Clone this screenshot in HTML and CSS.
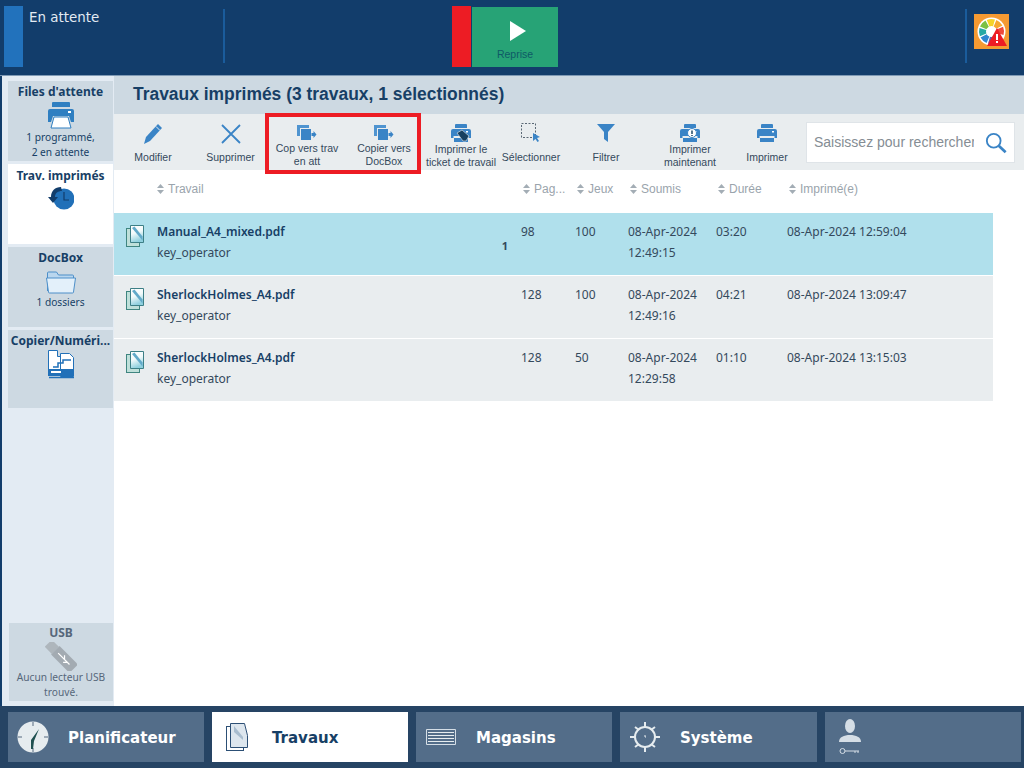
FILE: index.html
```html
<!DOCTYPE html>
<html lang="fr">
<head>
    <meta charset="UTF-8">
    <title>Travaux imprimés</title>
    <link rel="stylesheet" href="styles.css">
</head>
<body>
    <svg class="defs" width="0" height="0">
        <defs>
            <linearGradient id="docFill" x1="0" y1="0" x2="0.300" y2="1">
                <stop offset="0" stop-color="#ffffff"/>
                <stop offset="0.500" stop-color="#f2fafb"/>
                <stop offset="1" stop-color="#8fd0de"/>
            </linearGradient>
            <symbol id="ico-printer" viewBox="0 0 28 28">
                <path d="M6 1h16a1 1 0 0 1 1 1v4H5V2a1 1 0 0 1 1-1z" fill="#2f7fc1"/>
                <path d="M3 8h22a2 2 0 0 1 2 2v11h-3l-2-6H6l-2 6H1V10a2 2 0 0 1 2-2z" fill="#2f7fc1"/>
                <rect x="21" y="10" width="3" height="2" fill="#fff"/>
                <path d="M7 16h14l3 11H4z" fill="#fff" stroke="#2f7fc1"/>
            </symbol>
            <symbol id="ico-print-small" viewBox="0 0 20 20">
                <path d="M5 1h10a1 1 0 0 1 1 1v3H4V2a1 1 0 0 1 1-1z" fill="#3a84c6"/>
                <path d="M2 6h16a2 2 0 0 1 2 2v7h-3v-2H3v2H0V8a2 2 0 0 1 2-2z" fill="#3a84c6"/>
                <rect x="15" y="8" width="2" height="1.500" fill="#fff"/>
                <path d="M3 15h14v4H3z" fill="#3a84c6"/>
                <path d="M2 14h16" stroke="#e9edef"/>
            </symbol>
            <symbol id="ico-copy" viewBox="0 0 20 16">
                <rect x="0" y="0" width="12" height="11" fill="#4f94d0"/>
                <rect x="3.500" y="3.500" width="11" height="12" fill="#3a84c6" stroke="#e9edef"/>
                <path d="M14.500 8h2V6l3 3.500-3 3.500v-2h-2z" fill="#3a84c6"/>
            </symbol>
            <symbol id="ico-doc" viewBox="0 0 18 22">
                <rect x="0.500" y="3.500" width="13" height="18" fill="#bfe0da" stroke="#3f8580"/>
                <path d="M4.500 0.500h13v17h-13z" fill="url(#docFill)" stroke="#3d7f86"/>
                <path d="M6 3l2.500-1.500 8 10v4z" fill="#62a9c9"/>
            </symbol>
            <symbol id="ico-sort" viewBox="0 0 7 10">
                <path d="M3.500 0L7 4H0zM3.500 10L0 6h7z" fill="#a3adb5"/>
            </symbol>
        </defs>
    </svg>

    <header class="status-bar">
        <div class="status-block"></div>
        <div class="status-text">En attente</div>
        <div class="status-sep"></div>
        <div class="stop-btn"></div>
        <div class="resume-btn">
            <svg class="resume-icon" width="16" height="20" viewBox="0 0 16 20"><path d="M0 0l16 10L0 20z" fill="#fff"/></svg>
            <span>Reprise</span>
        </div>
        <div class="status-sep status-sep-right"></div>
        <div class="alert-btn">
            <svg width="35" height="35" viewBox="0 0 35 35">
                <rect width="35" height="35" fill="#f59a32"/>
                <circle cx="17.500" cy="17.500" r="14" fill="#fff"/>
                <g fill="none" stroke-width="7">
                    <circle cx="17.500" cy="17.500" r="9" pathLength="80" stroke-dasharray="8.500 71.500" stroke="#f5d327" transform="rotate(-112 17.500 17.500)"/>
                    <circle cx="17.500" cy="17.500" r="9" pathLength="80" stroke-dasharray="8.500 71.500" stroke="#f7a62e" transform="rotate(-67 17.500 17.500)"/>
                    <circle cx="17.500" cy="17.500" r="9" pathLength="80" stroke-dasharray="8.500 71.500" stroke="#ee4a3b" transform="rotate(-22 17.500 17.500)"/>
                    <circle cx="17.500" cy="17.500" r="9" pathLength="80" stroke-dasharray="8.500 71.500" stroke="#7cc143" transform="rotate(-157 17.500 17.500)"/>
                    <circle cx="17.500" cy="17.500" r="9" pathLength="80" stroke-dasharray="8.500 71.500" stroke="#27a9a4" transform="rotate(158 17.500 17.500)"/>
                    <circle cx="17.500" cy="17.500" r="9" pathLength="80" stroke-dasharray="8.500 71.500" stroke="#2f86d0" transform="rotate(113 17.500 17.500)"/>
                    <circle cx="17.500" cy="17.500" r="9" pathLength="80" stroke-dasharray="8.500 71.500" stroke="#5b62b5" transform="rotate(68 17.500 17.500)"/>
                </g>
                <path d="M23 14L33 32H13z" fill="#ed1c24"/>
                <rect x="22" y="20" width="2" height="6" fill="#fff"/>
                <rect x="22" y="27" width="2" height="2" fill="#fff"/>
            </svg>
        </div>
    </header>

    <div class="main">
        <nav class="sidebar">
            <div class="side-item">
                <div class="side-title">Files d'attente</div>
                <svg class="side-icon side-icon-printer" width="28" height="28"><use href="#ico-printer"/></svg>
                <div class="side-sub">1 programmé,<br>2 en attente</div>
            </div>
            <div class="side-item side-active">
                <div class="side-title">Trav. imprimés</div>
                <svg class="side-icon" width="26" height="25" viewBox="0 0 26 25">
                    <circle cx="16" cy="13" r="10.500" fill="#2170b8"/>
                    <path d="M16 6v8h5" fill="none" stroke="#123d6b" stroke-width="1.200"/>
                    <path d="M13 1C7 1 3 5 3 11H0l5 6 5-6H7c0-4 3-6 7-6z" fill="#123d6b"/>
                </svg>
            </div>
            <div class="side-item">
                <div class="side-title">DocBox</div>
                <svg class="side-icon side-icon-folder" width="30" height="24" viewBox="0 0 30 24">
                    <path d="M1.500 21V3a1 1 0 0 1 1-1h8l2 3h14a1 1 0 0 1 1 1v3" fill="#b9d6ee" stroke="#4d8fc9"/>
                    <path d="M0.500 8h29l-2 14a1 1 0 0 1-1 1H3.500a1 1 0 0 1-1-1z" fill="#e3f0fa" stroke="#4d8fc9"/>
                </svg>
                <div class="side-sub">1 dossiers</div>
            </div>
            <div class="side-item side-copy">
                <div class="side-title">Copier/Numéri...</div>
                <svg class="side-icon" width="28" height="29" viewBox="0 0 28 29">
                    <path d="M1.500 0.500h9v6h5v14h-14z" fill="#fff" stroke="#2170b8"/>
                    <path d="M13.500 3.500h9l4 4v19h-13z" fill="#fff" stroke="#2170b8"/>
                    <path d="M6 17h5v-4h5v-3h8" fill="none" stroke="#2170b8" stroke-width="1.500"/>
                    <path d="M1 19h26v7H1z" fill="#2170b8"/>
                    <path d="M4 21h10v2H4z" fill="#fff"/>
                    <path d="M2 27.500h25" stroke="#2170b8" stroke-width="1.500"/>
                </svg>
            </div>
            <div class="side-item side-usb">
                <div class="side-title">USB</div>
                <svg class="side-icon" width="32" height="29" viewBox="0 0 32 29">
                    <g transform="rotate(45 16 14)">
                        <rect x="-2" y="9" width="10" height="10" fill="#aeb6bc"/>
                        <rect x="8" y="8" width="26" height="12" fill="#a3abb2"/>
                        <path d="M12 14h16M18 11l3 3M22 17l3-3" stroke="#fff" stroke-width="1.200"/>
                    </g>
                </svg>
                <div class="side-sub">Aucun lecteur USB<br>trouvé.</div>
            </div>
        </nav>

        <section class="content">
            <h1 class="page-title">Travaux imprimés (3 travaux, 1 sélectionnés)</h1>

            <div class="toolbar">
                <div class="tool tool-modify">
                    <svg class="tool-icon" width="20" height="22" viewBox="0 0 20 22">
                        <path d="M15 1l4 4L7 18l-6 3 2-7z" fill="#3a84c6"/>
                        <path d="M13 3.500l4 4" stroke="#e9edef"/>
                    </svg>
                    <div class="tool-label">Modifier</div>
                </div>
                <div class="tool tool-delete">
                    <svg class="tool-icon" width="20" height="22" viewBox="0 0 20 22">
                        <path d="M1 2l18 18M19 2L1 20" stroke="#3a84c6" stroke-width="1.800" fill="none"/>
                    </svg>
                    <div class="tool-label">Supprimer</div>
                </div>
                <div class="tool-group">
                    <div class="tool tool-copy-queue">
                        <svg class="tool-icon" width="20" height="16"><use href="#ico-copy"/></svg>
                        <div class="tool-label">Cop vers trav<br>en att</div>
                    </div>
                    <div class="tool tool-copy-box">
                        <svg class="tool-icon" width="20" height="16"><use href="#ico-copy"/></svg>
                        <div class="tool-label">Copier vers<br>DocBox</div>
                    </div>
                </div>
                <div class="tool tool-two tool-ticket">
                    <svg class="tool-icon" width="20" height="20" viewBox="0 0 20 20">
                        <use href="#ico-print-small"/>
                        <path d="M6 10l5-3 7 6-3 5-3 0z" fill="#17405f" stroke="#e9edef" stroke-width="0.600"/>
                    </svg>
                    <div class="tool-label">Imprimer le<br>ticket de travail</div>
                </div>
                <div class="tool tool-select">
                    <svg class="tool-icon" width="20" height="20" viewBox="0 0 20 20">
                        <path d="M0.500 0.500h14v14h-14z" fill="none" stroke="#5a6875" stroke-dasharray="2 1.500"/>
                        <path d="M12 10l7 4-3 1 2 3-1.500 1-2-3-2.500 2z" fill="#3a84c6"/>
                    </svg>
                    <div class="tool-label">Sélectionner</div>
                </div>
                <div class="tool tool-filter">
                    <svg class="tool-icon" width="18" height="20" viewBox="0 0 18 20">
                        <path d="M0 1h18l-7 8v10l-4-3V9z" fill="#3a84c6"/>
                    </svg>
                    <div class="tool-label">Filtrer</div>
                </div>
                <div class="tool tool-two tool-print-now">
                    <svg class="tool-icon" width="20" height="20" viewBox="0 0 20 20">
                        <use href="#ico-print-small"/>
                        <circle cx="12" cy="10" r="4.500" fill="#fff" stroke="#3a84c6"/>
                        <path d="M12 7.500v3.500M12 12v1" stroke="#123d5c" stroke-width="1.400"/>
                    </svg>
                    <div class="tool-label">Imprimer<br>maintenant</div>
                </div>
                <div class="tool tool-print">
                    <svg class="tool-icon" width="20" height="20"><use href="#ico-print-small"/></svg>
                    <div class="tool-label">Imprimer</div>
                </div>
                <div class="search">
                    <input class="search-input" type="text" placeholder="Saisissez pour rechercher">
                    <svg width="24" height="24" viewBox="0 0 24 24">
                        <circle cx="9.500" cy="9.500" r="7.500" fill="none" stroke="#3a84c6" stroke-width="2"/>
                        <path d="M15 15l7.500 7" stroke="#3a84c6" stroke-width="3"/>
                    </svg>
                </div>
            </div>

            <div class="job-table">
                <div class="job-row job-head">
                    <div></div>
                    <div class="col-head col-first"><svg width="7" height="10"><use href="#ico-sort"/></svg>Travail</div>
                    <div class="col-head"><svg width="7" height="10"><use href="#ico-sort"/></svg>Pag...</div>
                    <div class="col-head"><svg width="7" height="10"><use href="#ico-sort"/></svg>Jeux</div>
                    <div class="col-head"><svg width="7" height="10"><use href="#ico-sort"/></svg>Soumis</div>
                    <div class="col-head"><svg width="7" height="10"><use href="#ico-sort"/></svg>Durée</div>
                    <div class="col-head"><svg width="7" height="10"><use href="#ico-sort"/></svg>Imprimé(e)</div>
                </div>

                <div class="job-row job-item job-selected">
                    <div class="job-icon"><svg width="18" height="22"><use href="#ico-doc"/></svg></div>
                    <div class="job-name">
                        <div><div class="job-file">Manual_A4_mixed.pdf</div>key_operator</div>
                        <span class="job-badge">1</span>
                    </div>
                    <div>98</div>
                    <div>100</div>
                    <div>08-Apr-2024<br>12:49:15</div>
                    <div>03:20</div>
                    <div>08-Apr-2024 12:59:04</div>
                </div>
                <div class="job-row job-item">
                    <div class="job-icon"><svg width="18" height="22"><use href="#ico-doc"/></svg></div>
                    <div class="job-name">
                        <div><div class="job-file">SherlockHolmes_A4.pdf</div>key_operator</div>
                    </div>
                    <div>128</div>
                    <div>100</div>
                    <div>08-Apr-2024<br>12:49:16</div>
                    <div>04:21</div>
                    <div>08-Apr-2024 13:09:47</div>
                </div>
                <div class="job-row job-item">
                    <div class="job-icon"><svg width="18" height="22"><use href="#ico-doc"/></svg></div>
                    <div class="job-name">
                        <div><div class="job-file">SherlockHolmes_A4.pdf</div>key_operator</div>
                    </div>
                    <div>128</div>
                    <div>50</div>
                    <div>08-Apr-2024<br>12:29:58</div>
                    <div>01:10</div>
                    <div>08-Apr-2024 13:15:03</div>
                </div>
            </div>
        </section>
    </div>

    <footer class="tabs">
        <div class="tab">
            <div class="tab-icon">
                <svg width="32" height="32" viewBox="0 0 32 32">
                    <circle cx="16" cy="16" r="15.500" fill="#e6ecef"/>
                    <path d="M16 1v4M16 27v4M1 16h4M27 16h4" stroke="#54697f"/>
                    <path d="M14 28l0-9 8-11-5 12-1 8z" fill="#1f5050"/>
                </svg>
            </div>
            <span>Planificateur</span>
        </div>
        <div class="tab tab-active">
            <div class="tab-icon">
                <svg width="22" height="28" viewBox="0 0 22 28">
                    <rect x="0.500" y="3.500" width="17" height="24" fill="#fff" stroke="#2c4f75"/>
                    <path d="M4.500 0.500h14l3 12v12h-17z" fill="#dde6ee" stroke="#2c4f75"/>
                    <path d="M8 3l9 11v3L8 9z" fill="#a9bdcf"/>
                </svg>
            </div>
            <span>Travaux</span>
        </div>
        <div class="tab">
            <div class="tab-icon">
                <svg width="30" height="16" viewBox="0 0 30 16">
                    <path d="M0.500 0.500h29v15H0.500z" fill="none" stroke="#d5dee6"/>
                    <path d="M2 3.500h26M2 6.500h26M2 9.500h26M2 12.500h26" stroke="#e6ecef"/>
                </svg>
            </div>
            <span>Magasins</span>
        </div>
        <div class="tab">
            <div class="tab-icon">
                <svg width="32" height="32" viewBox="0 0 32 32">
                    <circle cx="16" cy="16" r="10" fill="none" stroke="#e6ecef" stroke-width="2"/>
                    <path d="M16 1v5M16 26v5M1 16h5M26 16h5M6 6l4 3M26 6l-4 3M6 26l4-3M26 26l-4-3" stroke="#e6ecef" stroke-width="2"/>
                    <path d="M16 14v2h1" stroke="#e6ecef" fill="none"/>
                </svg>
            </div>
            <span>Système</span>
        </div>
        <div class="tab">
            <div class="tab-icon">
                <svg width="22" height="36" viewBox="0 0 22 36">
                    <ellipse cx="11" cy="7" rx="5" ry="7" fill="#d5dee6"/>
                    <path d="M0 23c0-5 5-7 11-7s11 2 11 7z" fill="#d5dee6"/>
                    <circle cx="3.500" cy="32" r="2.500" fill="none" stroke="#d5dee6"/>
                    <path d="M6 32h14M16 32v2M19 32v2" stroke="#d5dee6"/>
                </svg>
            </div>
        </div>
    </footer>
</body>
</html>
```
FILE: styles.css
```css
* {
    box-sizing: border-box;
}
body {
    margin: 0;
    width: 1024px;
    height: 768px;
    overflow: hidden;
    display: flex;
    flex-direction: column;
    background-color: #123d6b;
    font-family: "Liberation Sans", Arial, sans-serif;
}
.defs {
    display: block;
    height: 0;
}

/* top status bar */
.status-bar {
    height: 76px;
    flex: none;
    display: flex;
    border-bottom: 1px solid #7f9ab5;
    padding-left: 4px;
    background-color: #123d6b;
}
.status-block {
    width: 19px;
    height: 61px;
    margin-top: 6px;
    background-color: #2272bc;
}
.status-text {
    width: 200px;
    padding: 10px 0 0 6px;
    font-family: "DejaVu Sans", sans-serif;
    font-size: 13.400px;
    line-height: 15px;
    color: #e3ebf3;
}
.status-sep {
    width: 2px;
    height: 54px;
    margin-top: 9px;
    background-color: #1a5c9c;
}
.status-sep-right {
    margin-left: 407px;
}
.stop-btn {
    width: 19px;
    height: 61px;
    margin: 6px 1px 0 227px;
    background-color: #ed1c24;
}
.resume-btn {
    width: 86px;
    height: 60px;
    margin-top: 7px;
    display: flex;
    flex-direction: column;
    align-items: center;
    background-color: #27a376;
    color: #0e5a66;
    font-size: 10.500px;
}
.resume-icon {
    margin: 14px 0 7px 6px;
}
.alert-btn {
    margin: 14px 0 0 7px;
    width: 35px;
    height: 35px;
}

.main {
    flex: 1;
    min-height: 0;
    display: flex;
    margin-left: 2px;
    background-color: #fff;
}

/* left column */
.sidebar {
    width: 112px;
    flex: none;
    display: flex;
    flex-direction: column;
    gap: 3px;
    padding: 5px 1px 5px 6px;
    background-color: #e3ebf3;
}
.side-item {
    height: 80px;
    display: flex;
    flex-direction: column;
    align-items: center;
    background-color: #cdd9e2;
    color: #173f66;
}
.side-active {
    padding-top: 1px;
    background-color: #fff;
}
.side-active .side-icon {
    margin-top: 1px;
}
.side-copy {
    height: 78px;
}
.side-usb {
    height: 78px;
    margin: auto 0 0 1px;
    color: #56677a;
}
.side-title {
    height: 20px;
    margin: 1px 0 -1px;
    font-family: "Noto Sans", sans-serif;
    font-size: 12px;
    font-weight: 700;
    line-height: 20px;
    white-space: nowrap;
}
.side-icon {
    display: block;
    flex: none;
}
.side-icon-printer {
    margin-bottom: 1px;
}
.side-sub {
    font-family: "Noto Sans", sans-serif;
    font-size: 10.200px;
    line-height: 15px;
    text-align: center;
    white-space: nowrap;
}
.side-icon-folder {
    margin: 3px 0 1px;
}
.side-usb .side-title {
    height: 19px;
    margin: 0;
    line-height: 19px;
}
.side-usb .side-sub {
    margin-top: -1px;
}

.content {
    flex: 1;
    min-width: 0;
    display: flex;
    flex-direction: column;
}
.page-title {
    height: 38px;
    margin: 0;
    padding-left: 19px;
    background-color: #cdd9e2;
    color: #173f66;
    font-size: 17.450px;
    line-height: 36px;
    font-weight: 700;
}

/* toolbar */
.toolbar {
    height: 56px;
    flex: none;
    display: flex;
    background-color: #e9edef;
}
.tool {
    flex: none;
    height: 100%;
    display: flex;
    flex-direction: column;
    align-items: center;
    justify-content: flex-end;
    padding-bottom: 6px;
    position: relative;
    color: #34495c;
    font-size: 10.500px;
    line-height: 13px;
    text-align: center;
    white-space: nowrap;
}
.tool-two {
    padding-bottom: 1px;
}
.tool-icon {
    position: absolute;
    top: 9px;
    left: 50%;
    transform: translateX(-50%);
}
.tool-modify { width: 78px; }
.tool-delete { width: 77px; }
.tool-group {
    display: flex;
    height: 53px;
    margin-top: 3px;
    outline: 4px solid #ed1c24;
    gap: 6px;
    flex: none;
}
.tool-copy-queue { width: 76px; }
.tool-copy-box { width: 66px; }
.tool-group .tool-icon {
    top: 8px;
}
.tool-group .tool {
    padding-bottom: 2px;
}
.tool-ticket { width: 76px; margin-left: 6px; }
.tool-select { width: 64px; }
.tool-filter { width: 86px; }
.tool-print-now { width: 82px; }
.tool-print { width: 72px; }
.search {
    width: 209px;
    height: 41px;
    margin: 8px 0 0 3px;
    display: flex;
    align-items: center;
    padding: 0 7px;
    background-color: #fff;
    border: 1px solid #dfe4e8;
}
.search-input {
    width: 160px;
    height: 100%;
    margin-right: 11px;
    padding: 0 0 2px;
    border: none;
    outline: none;
    background: none;
    font-family: "Liberation Sans", Arial, sans-serif;
    font-size: 14px;
}
.search-input::placeholder {
    color: #858d94;
    opacity: 1;
}

/* job list */
.job-table {
    width: 879px;
    display: flex;
    flex-direction: column;
    gap: 1px;
    font-family: "Noto Sans", sans-serif;
    font-size: 12px;
    line-height: 21px;
    color: #34495c;
}
.job-row {
    display: grid;
    grid-template-columns: 43px 364px 54px 53px 88px 71px 1fr;
}
.job-head {
    height: 42px;
    padding-bottom: 4px;
    align-items: center;
    font-family: "Liberation Sans", Arial, sans-serif;
    font-size: 12px;
    color: #9aa4ac;
}
.col-head {
    display: flex;
    align-items: center;
    gap: 4px;
    padding-left: 2px;
    white-space: nowrap;
}
.col-first {
    padding-left: 0;
}
.job-item {
    height: 62px;
    padding-top: 8px;
    background-color: #e9edef;
}
.job-selected {
    background-color: #b0e0ec;
}
.job-icon {
    padding: 4px 0 0 12px;
}
.job-name {
    display: flex;
    justify-content: space-between;
    padding-right: 13px;
}
.job-file {
    font-weight: 600;
    color: #173f66;
}
.job-badge {
    align-self: center;
    margin-bottom: 6px;
    font-weight: 700;
    font-size: 11px;
}

/* bottom tabs */
.tabs {
    height: 62px;
    flex: none;
    display: flex;
    gap: 8px;
    padding: 6px 3px 6px 8px;
    background-color: #264464;
}
.tab {
    flex: none;
    width: 196px;
    display: flex;
    align-items: center;
    background-color: #536d89;
    color: #fff;
    font-family: "DejaVu Sans", sans-serif;
    font-size: 15px;
    font-weight: 700;
}
.tab:nth-child(n+4) {
    width: 197px;
}
.tab:last-child {
    width: 196px;
}
.tab-active {
    background-color: #fff;
    color: #173f66;
}
.tab span {
    margin-top: 2px;
}
.tab-icon {
    width: 50px;
    margin-right: 10px;
    display: flex;
    justify-content: center;
    flex: none;
}
```
